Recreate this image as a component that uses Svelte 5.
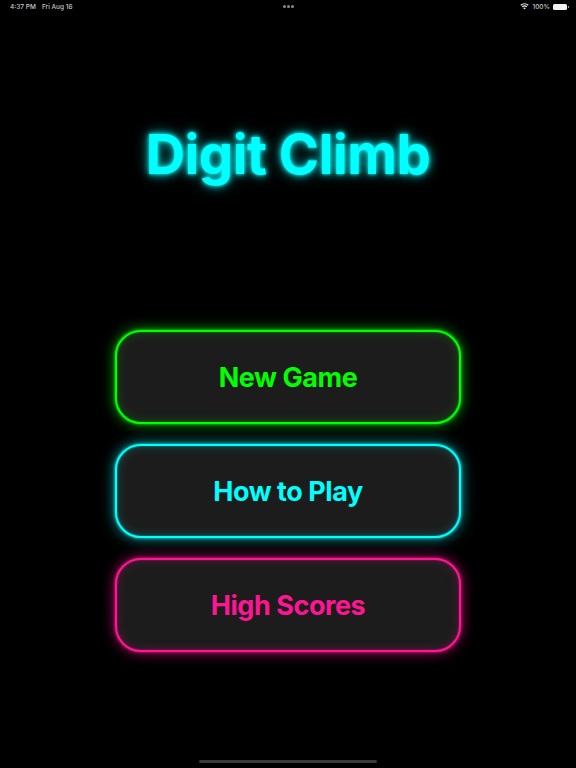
<script>
	const buttons = [
		{ label: 'New Game', kind: 'green' },
		{ label: 'How to Play', kind: 'cyan' },
		{ label: 'High Scores', kind: 'pink' }
	];
</script>

<div class="screen">
	<header class="status">
		<div class="status__left">
			<span>4:37 PM</span>
			<span>Fri Aug 16</span>
		</div>
		<div class="dots"><i></i><i></i><i></i></div>
		<div class="status__right">
			<svg class="wifi" viewBox="0 0 12 9" width="9" height="7" aria-hidden="true">
				<path d="M6 8.6 4.2 6.5a2.7 2.7 0 0 1 3.6 0Z" fill="#e8e8e8" />
				<path d="M3.4 5.6 2.3 4.3a5.6 5.6 0 0 1 7.4 0L8.6 5.6a3.9 3.9 0 0 0-5.2 0Z" fill="#e8e8e8" />
				<path d="M1.6 3.5.4 2.2a8.4 8.4 0 0 1 11.2 0l-1.2 1.3a6.6 6.6 0 0 0-8.8 0Z" fill="#e8e8e8" />
			</svg>
			<span>100%</span>
			<div class="battery"></div>
		</div>
	</header>

	<h1>Digit Climb</h1>

	<nav class="menu">
		{#each buttons as b}
			<button type="button" class={b.kind}>{b.label}</button>
		{/each}
	</nav>

	<div class="home"></div>
</div>

<style>
	:global(body) {
		background: #000;
	}
	.screen {
		width: 576px;
		height: 768px;
		background: #000;
		overflow: hidden;
		display: flex;
		flex-direction: column;
		align-items: center;
		font-family: Inter, "Liberation Sans", sans-serif;
	}
	.status {
		width: 100%;
		box-sizing: border-box;
		height: 13px;
		padding: 0 9px 0 10px;
		display: grid;
		grid-template-columns: 1fr auto 1fr;
		align-items: center;
		color: #c8c8c8;
		font-size: 6.5px;
		font-weight: 500;
	}
	.status__left {
		display: flex;
		gap: 6px;
	}
	.status__right {
		display: flex;
		justify-content: flex-end;
		align-items: center;
		gap: 2px;
	}
	.wifi {
		margin-right: 1px;
	}
	.dots {
		display: flex;
		gap: 1px;
	}
	.dots i {
		width: 3px;
		height: 3px;
		border-radius: 50%;
		background: #8a8a8a;
	}
	.battery {
		width: 14px;
		height: 6px;
		margin-left: 1px;
		border-radius: 1.5px;
		background: #f2f2f2;
		position: relative;
	}
	.battery::after {
		content: '';
		position: absolute;
		right: -1.5px;
		top: 2px;
		width: 1px;
		height: 2px;
		background: #999;
	}
	h1 {
		margin: 109px 0 0;
		color: #00ffff;
		font-size: 54.5px;
		line-height: 64px;
		font-weight: 700;
		letter-spacing: -0.5px;
		text-shadow: 0 0 3px rgba(0, 255, 255, 0.9), 0 0 7px rgba(0, 255, 255, 0.75), 0 0 14px rgba(0, 255, 255, 0.6);
	}
	.menu {
		margin-top: 144px;
		display: flex;
		flex-direction: column;
		gap: 20.5px;
	}
	button {
		width: 346px;
		height: 93.5px;
		box-sizing: border-box;
		border: 2px solid var(--c);
		border-radius: 26px;
		background: #1c1c1c;
		color: var(--c);
		font: 650 27px Inter, "Liberation Sans", sans-serif;
		letter-spacing: -0.45px;
		box-shadow: 0 0 3px var(--c), 0 0 14px var(--mid), inset 0 0 2px var(--mid), inset 0 0 11px var(--soft);
		padding: 1.5px 0 0;
	}
	.green {
		--c: #00ff00;
		--mid: rgba(0, 255, 0, 0.65);
		--soft: rgba(0, 255, 0, 0.22);
	}
	.cyan {
		--c: #00ffff;
		--mid: rgba(0, 255, 255, 0.65);
		--soft: rgba(0, 255, 255, 0.22);
	}
	.pink {
		--c: #ff1493;
		--mid: rgba(255, 20, 147, 0.65);
		--soft: rgba(255, 20, 147, 0.22);
	}
	.home {
		margin-top: 108px;
		width: 178px;
		height: 3px;
		border-radius: 2px;
		background: #3c3c3c;
	}
</style>
